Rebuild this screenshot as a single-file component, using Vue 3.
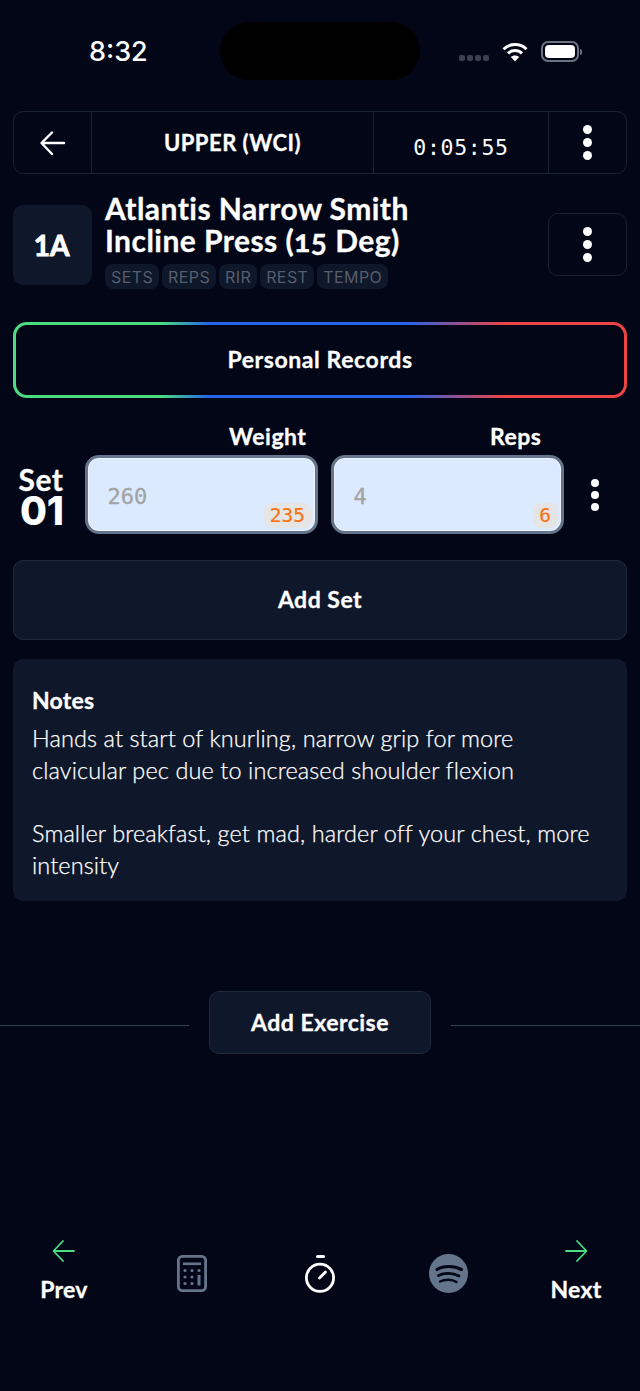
<template>
  <div class="screen">
    <div class="status-bar">
      <span class="clock">8:32</span>
      <div class="island"></div>
      <div class="status-icons">
        <div class="signal"><i v-for="n in 4" :key="n"></i></div>
        <svg class="wifi" width="26" height="20" viewBox="0 0 26 20">
          <path d="M1.5 7.2C7.8 1 18.2 1 24.5 7.2" fill="none" stroke="#fff" stroke-width="3" />
          <path d="M6 11.4C10 7.6 16 7.6 20 11.4" fill="none" stroke="#fff" stroke-width="3" />
          <path d="M13 19.5L8.9 15C11.2 13 14.8 13 17.1 15Z" fill="#fff" />
        </svg>
        <div class="battery"><div class="battery-fill"></div></div>
        <div class="battery-cap"></div>
      </div>
    </div>

    <div class="top-bar">
      <div class="cell back">
        <svg width="28" height="28" viewBox="0 0 28 28" fill="none" stroke="#fff" stroke-width="2.4" stroke-linecap="round" stroke-linejoin="round">
          <path d="M25 14H3M13 3.5L2.5 14L13 25" />
        </svg>
      </div>
      <div class="cell workout">UPPER (WCI)</div>
      <div class="cell timer">0:05:55</div>
      <div class="cell more">
        <div class="dots"><i></i><i></i><i></i></div>
      </div>
    </div>

    <div class="exercise">
      <div class="badge">1A</div>
      <div class="exercise-info">
        <h1>Atlantis Narrow Smith<br />Incline Press (<span class="oldstyle">15</span> Deg)</h1>
        <div class="tags">
          <span v-for="tag in tags" :key="tag">{{ tag }}</span>
        </div>
      </div>
      <div class="exercise-menu">
        <div class="dots"><i></i><i></i><i></i></div>
      </div>
    </div>

    <div class="records">Personal Records</div>

    <div class="labels">
      <span class="label-weight">Weight</span>
      <span class="label-reps">Reps</span>
    </div>

    <div class="set-row">
      <div class="set-name">
        <span>Set</span>
        <strong>01</strong>
      </div>
      <div class="field weight">
        <span class="placeholder">260</span>
        <span class="prev-value">235</span>
      </div>
      <div class="field reps">
        <span class="placeholder">4</span>
        <span class="prev-value">6</span>
      </div>
      <div class="set-menu">
        <div class="dots"><i></i><i></i><i></i></div>
      </div>
    </div>

    <div class="add-set">Add Set</div>

    <div class="notes">
      <h2>Notes</h2>
      <p>Hands at start of knurling, narrow grip for more<br />clavicular pec due to increased shoulder flexion</p>
      <p class="second">Smaller breakfast, get mad, harder off your chest, more intensity</p>
    </div>

    <div class="add-exercise-row">
      <div class="rule"></div>
      <div class="add-exercise">Add Exercise</div>
      <div class="rule"></div>
    </div>

    <nav class="bottom-nav">
      <div class="nav-step">
        <svg width="26" height="24" viewBox="0 0 26 24" fill="none" stroke="#4ade80" stroke-width="1.8" stroke-linecap="round" stroke-linejoin="round">
          <path d="M23 12H3M12 2L2.5 12L12 22" />
        </svg>
        <span>Prev</span>
      </div>
      <svg class="calc" width="30" height="37" viewBox="0 0 30 37" fill="none">
        <rect x="1.4" y="1.4" width="27.2" height="34.2" rx="4" stroke="#64748b" stroke-width="2.8" />
        <rect x="6" y="7.5" width="18" height="2.6" fill="#64748b" />
        <g fill="#64748b">
          <circle cx="8" cy="15.5" r="1.6" /><circle cx="15" cy="15.5" r="1.6" /><circle cx="22" cy="15.5" r="1.6" />
          <circle cx="8" cy="22" r="1.6" /><circle cx="15" cy="22" r="1.6" />
          <circle cx="8" cy="28.5" r="1.6" /><circle cx="15" cy="28.5" r="1.6" />
          <rect x="20.5" y="20" width="3" height="10.5" />
        </g>
      </svg>
      <svg class="stopwatch" width="32" height="38" viewBox="0 0 32 38" fill="none" stroke="#fff" stroke-linecap="round">
        <path d="M13.5 1.5H19.5" stroke-width="3" />
        <circle cx="16" cy="22.8" r="13.6" stroke-width="2.8" />
        <path d="M15.5 23L21.5 17" stroke-width="2.8" />
      </svg>
      <svg class="spotify" width="39" height="39" viewBox="0 0 39 39" fill="none">
        <circle cx="19.5" cy="19.5" r="19.5" fill="#64748b" />
        <g stroke="#020617" stroke-linecap="round">
          <path d="M8 15.5C14.5 11.5 25 11.5 32.5 15.5" stroke-width="3.2" />
          <path d="M9.5 21.5C15 18.5 24 18.5 30 22" stroke-width="2.8" />
          <path d="M11 27.5C16 25 23 25 27.5 28" stroke-width="2.4" />
        </g>
      </svg>
      <div class="nav-step">
        <svg width="26" height="24" viewBox="0 0 26 24" fill="none" stroke="#4ade80" stroke-width="1.8" stroke-linecap="round" stroke-linejoin="round">
          <path d="M3 12H23M14 2L23.5 12L14 22" />
        </svg>
        <span>Next</span>
      </div>
    </nav>
  </div>
</template>

<script setup>
const tags = ['SETS', 'REPS', 'RIR', 'REST', 'TEMPO']
</script>

<style>
html,
body {
  margin: 0;
  background: #020617;
}
</style>

<style scoped>
.screen {
  width: 640px;
  height: 1391px;
  box-sizing: border-box;
  overflow: hidden;
  background: #020617;
  color: #fff;
  font-family: "Lato", "Inter", sans-serif;
}

.status-bar {
  height: 111px;
  position: relative;
}

.clock {
  position: absolute;
  left: 89px;
  top: 36px;
  font-family: "Inter", sans-serif;
  font-size: 27px;
  font-weight: 500;
  line-height: 32px;
}

.island {
  position: absolute;
  left: 220px;
  top: 22px;
  width: 200px;
  height: 58px;
  border-radius: 29px;
  background: #000;
}

.status-icons {
  position: absolute;
  left: 459px;
  top: 41px;
  display: flex;
  align-items: center;
}

.signal {
  display: flex;
  gap: 2px;
  margin-top: 13px;
  margin-right: 13px;
}

.signal i {
  width: 6px;
  height: 6px;
  border-radius: 2px;
  background: #3a4052;
}

.wifi {
  margin-right: 13px;
}

.battery {
  width: 38px;
  height: 21px;
  box-sizing: border-box;
  padding: 2px;
  border: 2px solid #6b7280;
  border-radius: 7px;
}

.battery-fill {
  width: 100%;
  height: 100%;
  border-radius: 4px;
  background: #fff;
}

.battery-cap {
  width: 2px;
  height: 6px;
  margin-left: 1px;
  border-radius: 0 2px 2px 0;
  background: #6b7280;
}

.top-bar {
  margin: 0 13px;
  height: 63px;
  box-sizing: border-box;
  display: grid;
  grid-template-columns: 78px 282px 175px 1fr;
  border: 1px solid #1a2333;
  border-radius: 10px;
}

.cell {
  display: flex;
  align-items: center;
  justify-content: center;
  border-right: 1px solid #1a2333;
}

.more {
  border-right: none;
}

.workout {
  font-size: 22px;
  font-weight: 700;
  letter-spacing: 0.5px;
  -webkit-text-stroke: 0.3px #fff;
}

.timer {
  padding-top: 10px;
  font-family: "DejaVu Sans Mono", monospace;
  font-size: 21.5px;
  letter-spacing: 0.7px;
}

.dots {
  display: flex;
  flex-direction: column;
  gap: 4px;
}

.dots i {
  width: 8px;
  height: 8px;
  border-radius: 50%;
  background: #fff;
}

.top-bar .dots i {
  width: 9px;
  height: 9px;
}

.exercise {
  display: flex;
  align-items: flex-start;
  margin: 18px 13px 0;
  height: 115px;
}

.badge {
  flex: none;
  width: 79px;
  height: 80px;
  box-sizing: border-box;
  padding-right: 2px;
  margin-top: 13px;
  display: flex;
  align-items: center;
  justify-content: center;
  border-radius: 10px;
  background: #0f172a;
  font-size: 28px;
  font-weight: 700;
  -webkit-text-stroke: 0.9px #fff;
}

.exercise-info {
  margin-left: 13px;
  flex: 1;
}

h1 {
  margin: 0;
  font-size: 30px;
  font-weight: 700;
  line-height: 32px;
  letter-spacing: 0.45px;
  -webkit-text-stroke: 0.3px #fff;
}

.oldstyle {
  font-feature-settings: "onum";
}

.tags {
  display: flex;
  gap: 3px;
  margin-top: 8px;
}

.tags span {
  height: 25px;
  padding: 0 6px;
  display: flex;
  align-items: center;
  border-radius: 8px;
  background: #0f172a;
  color: #565d6c;
  font-family: "Inter", sans-serif;
  font-size: 16px;
  letter-spacing: 0.4px;
}

.exercise-menu {
  flex: none;
  width: 79px;
  height: 63px;
  box-sizing: border-box;
  margin-top: 21px;
  display: flex;
  align-items: center;
  justify-content: center;
  border: 1px solid #1a2333;
  border-radius: 10px;
}

.exercise-menu .dots i {
  width: 9px;
  height: 9px;
}

.records {
  margin: 15px 13px 0;
  height: 76px;
  box-sizing: border-box;
  padding-bottom: 2px;
  display: flex;
  align-items: center;
  justify-content: center;
  border: 3px solid transparent;
  border-radius: 14px;
  background:
    linear-gradient(#020617, #020617) padding-box,
    linear-gradient(90deg, #4ade80 24%, #2563eb 32%, #2563eb 64%, #ef4444 80%) border-box;
  font-size: 23px;
  font-weight: 700;
  letter-spacing: 0.6px;
  -webkit-text-stroke: 0.3px #fff;
}

.labels {
  position: relative;
  height: 28px;
  margin-top: 24px;
  font-size: 23px;
  font-weight: 700;
  line-height: 28px;
  letter-spacing: 0.5px;
  -webkit-text-stroke: 0.3px #fff;
}

.label-weight {
  position: absolute;
  left: 229px;
}

.label-reps {
  position: absolute;
  left: 490px;
}

.set-row {
  display: flex;
  align-items: center;
  margin: 5px 13px 0;
}

.set-name {
  width: 58px;
  margin-top: 1px;
  margin-right: 14px;
  display: flex;
  flex-direction: column;
  align-items: center;
}

.set-name span {
  margin-left: -2px;
  font-size: 30px;
  font-weight: 700;
  line-height: 30px;
  letter-spacing: 0.6px;
  -webkit-text-stroke: 0.3px #fff;
}

.set-name strong {
  font-family: "Inter", sans-serif;
  font-size: 39px;
  font-weight: 800;
  line-height: 33px;
}

.field {
  position: relative;
  width: 233px;
  height: 79px;
  box-sizing: border-box;
  padding-left: 19.5px;
  border: 3px solid #64748b;
  border-radius: 14px;
  background: #dbeafe;
  box-shadow: inset 0 0 0 1px #eef4fd;
  display: flex;
  align-items: center;
}

.reps {
  margin-left: 13px;
}

.placeholder {
  margin-top: 4px;
  color: #a3a3a3;
  font-family: "DejaVu Sans Mono", monospace;
  font-size: 22px;
  -webkit-text-stroke: 0.3px #a3a3a3;
}

.prev-value {
  position: absolute;
  right: 3px;
  bottom: 3px;
  height: 25px;
  padding: 0 7px 0 6px;
  display: flex;
  align-items: center;
  border-radius: 8px;
  background: #e5e5e5;
  color: #f97316;
  font-family: "DejaVu Sans Mono", monospace;
  font-size: 19.5px;
  -webkit-text-stroke: 0.2px #f97316;
}

.set-menu {
  flex: 1;
  display: flex;
  justify-content: center;
  padding-right: 2px;
}

.add-set {
  margin: 26px 13px 0;
  height: 80px;
  box-sizing: border-box;
  padding-bottom: 2px;
  display: flex;
  align-items: center;
  justify-content: center;
  border: 1px solid #1e293b;
  border-radius: 10px;
  background: #0f172a;
  font-size: 23px;
  font-weight: 700;
  letter-spacing: 0.5px;
  -webkit-text-stroke: 0.3px #fff;
}

.notes {
  margin: 19px 13px 0;
  height: 242px;
  box-sizing: border-box;
  padding: 25px 19px 0;
  border-radius: 10px;
  background: #0f172a;
}

h2 {
  margin: 0;
  font-size: 23px;
  font-weight: 700;
  line-height: 32px;
  letter-spacing: 0.2px;
  -webkit-text-stroke: 0.3px #fff;
}

.notes p {
  margin: 6px 0 0;
  font-size: 23.5px;
  font-weight: 300;
  line-height: 32px;
  letter-spacing: 0.1px;
  -webkit-text-stroke: 0.25px #fff;
}

.notes p.second {
  margin-top: 31px;
}

.add-exercise-row {
  display: flex;
  align-items: center;
  gap: 20px;
  margin-top: 90px;
}

.rule {
  flex: 1;
  height: 1px;
  margin-top: 5px;
  background: #334155;
}

.add-exercise {
  width: 222px;
  height: 63px;
  box-sizing: border-box;
  padding-bottom: 2px;
  display: flex;
  align-items: center;
  justify-content: center;
  border: 1px solid #1e293b;
  border-radius: 10px;
  background: #0f172a;
  font-size: 23px;
  font-weight: 700;
  letter-spacing: 0.5px;
  -webkit-text-stroke: 0.3px #fff;
}

.bottom-nav {
  display: grid;
  grid-template-columns: repeat(5, 128px);
  justify-items: center;
  align-items: start;
  margin-top: 185px;
}

.nav-step {
  display: flex;
  flex-direction: column;
  align-items: center;
  gap: 12px;
}

.nav-step span {
  font-size: 23px;
  font-weight: 700;
  line-height: 28px;
  letter-spacing: 0.3px;
  -webkit-text-stroke: 0.3px #fff;
}

.calc,
.stopwatch,
.spotify {
  margin-top: 16px;
}

.spotify {
  margin-top: 15px;
  margin-left: 1px;
}
</style>
